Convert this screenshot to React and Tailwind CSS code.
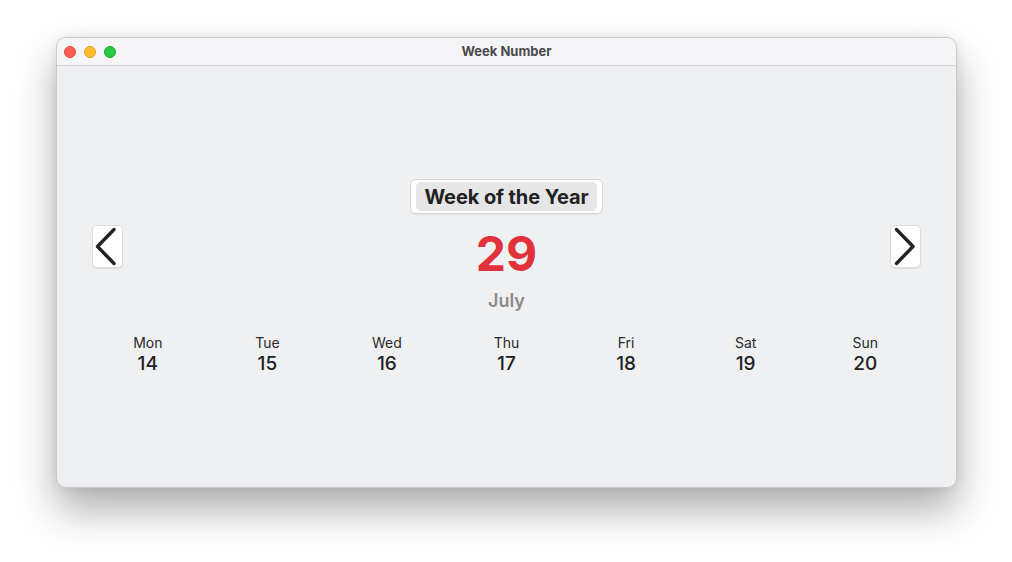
import React from "react";

const days = [
  ["Mon", 14],
  ["Tue", 15],
  ["Wed", 16],
  ["Thu", 17],
  ["Fri", 18],
  ["Sat", 19],
  ["Sun", 20],
];

export default function App() {
  return (
    <div
      className="w-[1012px] h-[562px] bg-white pt-[37px] pl-[56px] overflow-hidden"
      style={{ fontFamily: "Inter, 'Liberation Sans', sans-serif" }}
    >
      <div className="w-[901px] h-[451px] rounded-[10px] border border-[#c9c9cb] bg-[#eff0f2] overflow-hidden flex flex-col shadow-[0_22px_40px_rgba(0,0,0,0.32),0_0_12px_rgba(0,0,0,0.08)]">
        {/* title bar */}
        <div className="h-[28px] shrink-0 bg-[#f5f5f7] border-b border-[#d3d3d5] flex items-center relative">
          <div className="flex items-center gap-[8px] pl-[7px] pt-[1px]">
            <div className="w-[12px] h-[12px] rounded-full bg-[#fe5f57] border border-[#e2463f]" />
            <div className="w-[12px] h-[12px] rounded-full bg-[#febc2e] border border-[#e1a116]" />
            <div className="w-[12px] h-[12px] rounded-full bg-[#28c840] border border-[#1aab29]" />
          </div>
          <div className="absolute inset-0 flex items-center justify-center text-[13px] font-bold text-[#4b4b4d] pointer-events-none">
            Week Number
          </div>
        </div>

        {/* content */}
        <div className="flex-1 flex flex-col items-stretch pt-[113px]">
          <div className="flex justify-center">
            <div className="h-[35px] px-[5px] py-[2px] bg-white border border-[#d6d6d8] rounded-[6px] flex items-stretch shadow-[0_1px_1px_rgba(0,0,0,0.06)]">
              <div className="bg-[#e6e6e7] rounded-[5px] px-[8px] flex items-center text-[20px] font-bold text-[#222224] tracking-[-0.1px]">
                Week of the Year
              </div>
            </div>
          </div>

          <div className="mt-[11px] h-[43px] px-[35px] flex items-center justify-between">
            <button className="relative w-[31px] h-[43px] shrink-0 bg-white rounded-[5px] border border-[#dcdcde] shadow-[0_1px_1px_rgba(0,0,0,0.08)]">
              <svg className="absolute left-[-1px] top-[-1px]" width="31" height="43" viewBox="0 0 31 43">
                <path d="M22 4.5 L5.5 21.5 L22 38.5" fill="none" stroke="#232323" strokeWidth="3.4" strokeLinecap="round" strokeLinejoin="round" />
              </svg>
            </button>
            <div className="h-[43px] text-[48px] font-bold text-[#e1323c] leading-[43px] pt-[7px]">29</div>
            <button className="relative w-[31px] h-[43px] shrink-0 bg-white rounded-[5px] border border-[#dcdcde] shadow-[0_1px_1px_rgba(0,0,0,0.08)]">
              <svg className="absolute left-[-1px] top-[-1px]" width="31" height="43" viewBox="0 0 31 43">
                <path d="M6.5 4.5 L23 21.5 L6.5 38.5" fill="none" stroke="#232323" strokeWidth="3.4" strokeLinecap="round" strokeLinejoin="round" />
              </svg>
            </button>
          </div>

          <div className="mt-[21px] text-center text-[18px] font-semibold text-[#8a8a8d] leading-[24px]">July</div>

          <div className="mt-[21px] px-[31px] grid grid-cols-7">
            {days.map(([d, n]) => (
              <div key={d} className="flex flex-col items-center">
                <div className="text-[14px] text-[#2a2a2c] leading-[18px]">{d}</div>
                <div className="text-[19px] font-medium text-[#222224] leading-[22px] mt-[1px]">{n}</div>
              </div>
            ))}
          </div>
        </div>
      </div>
    </div>
  );
}
